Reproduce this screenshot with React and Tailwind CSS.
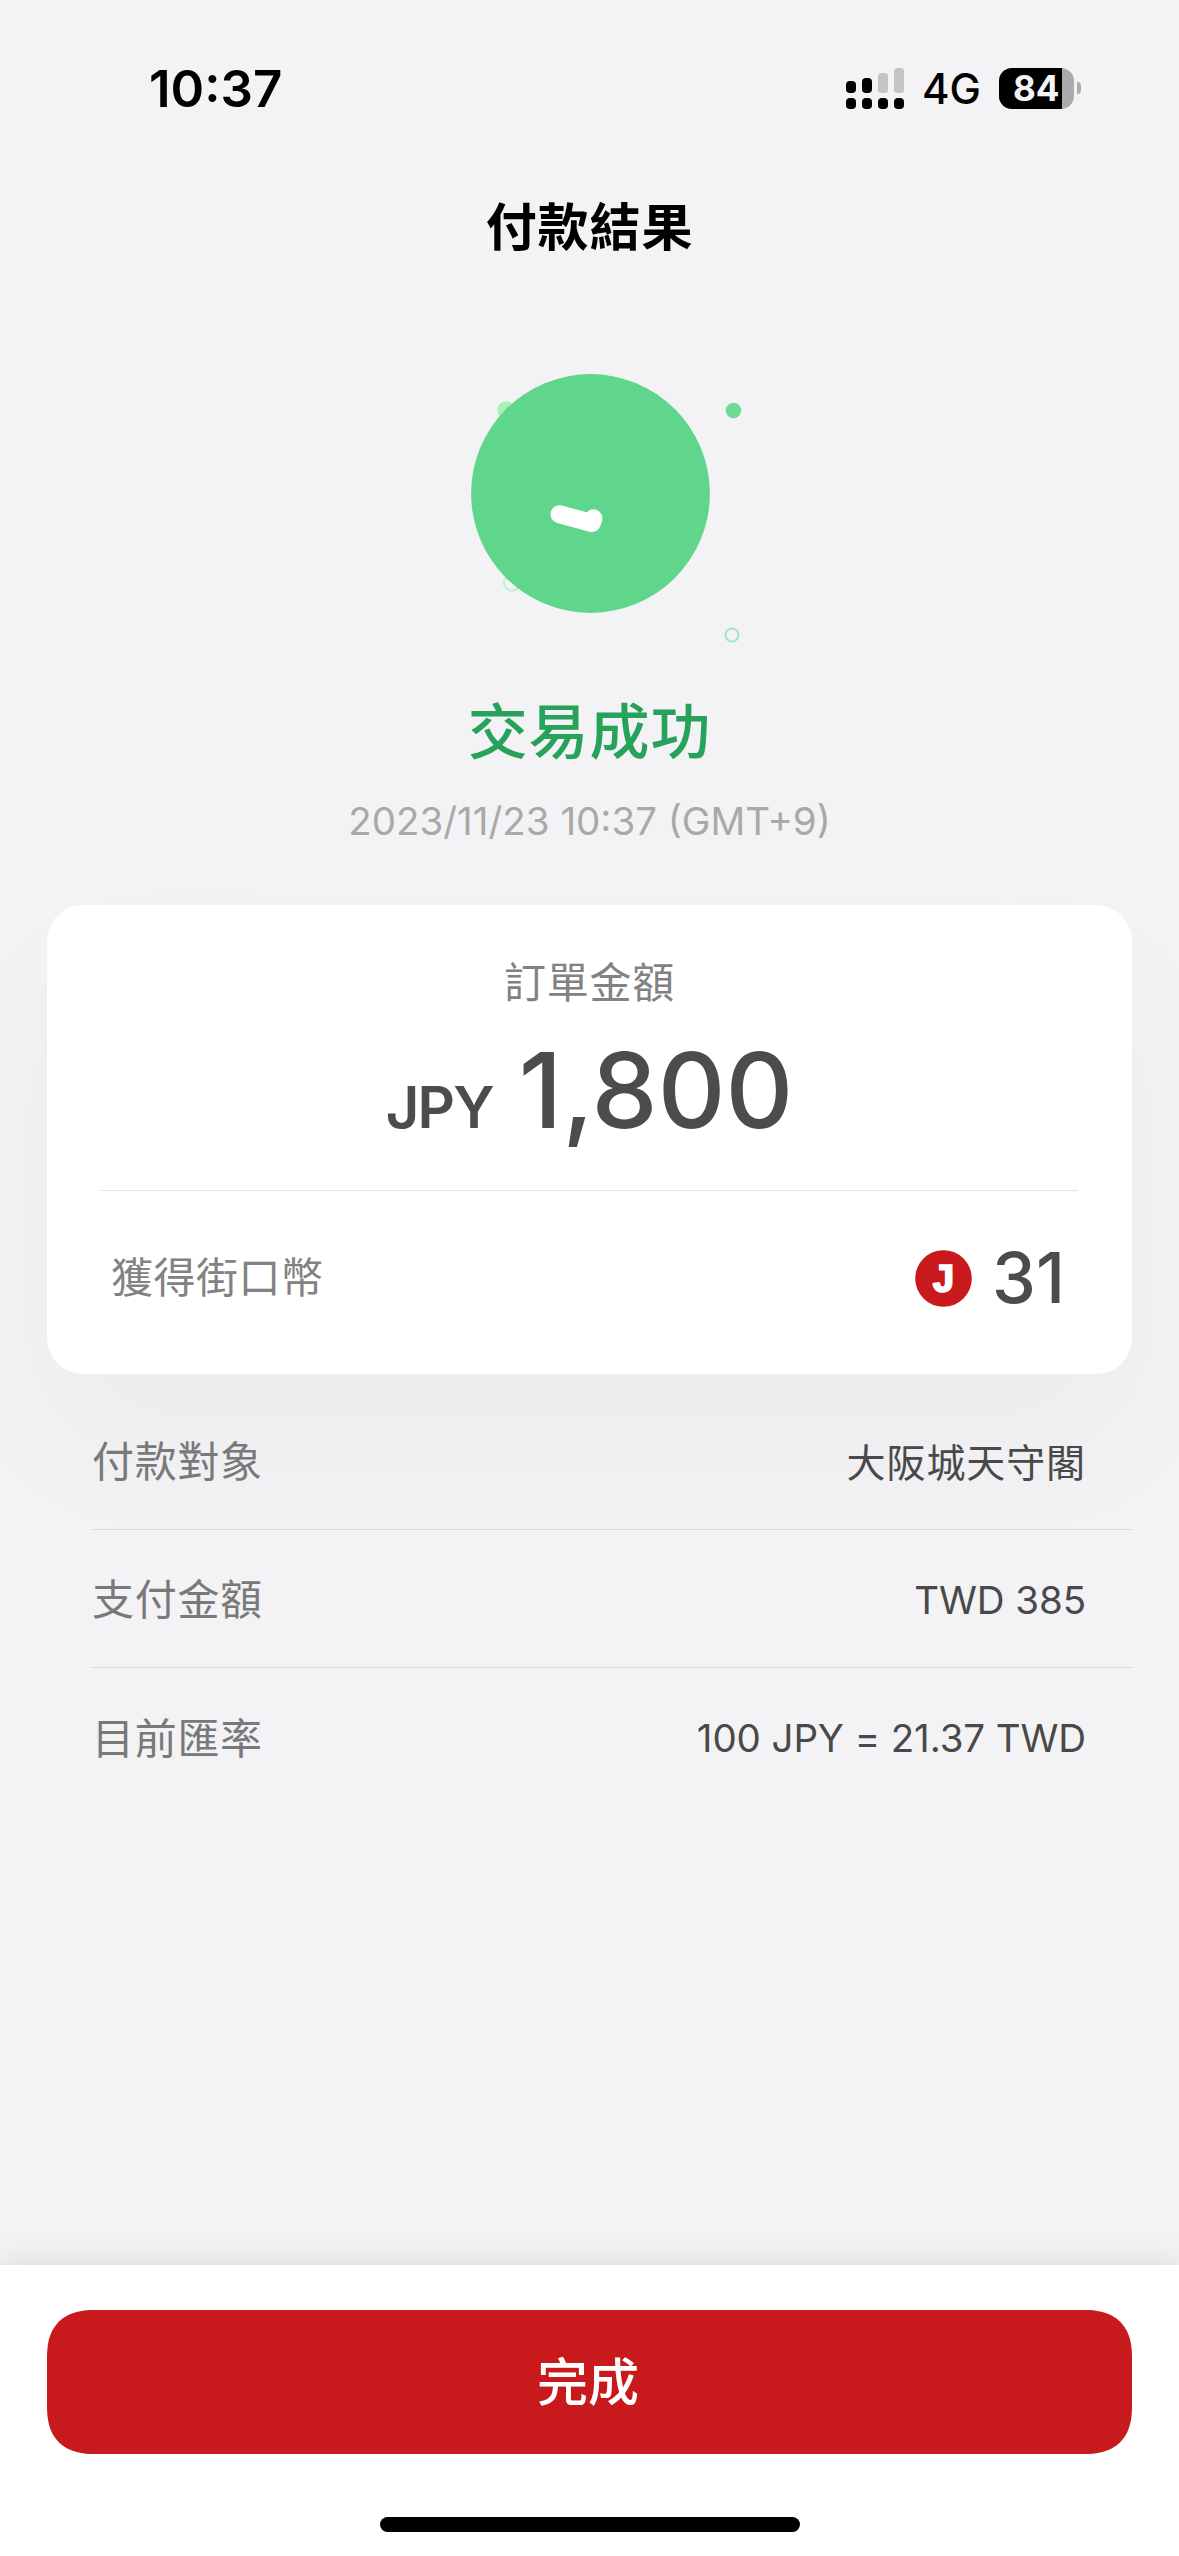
// Mobile signal: dotted second line on the bottom row
function SignalIcon() {
  return (
    <svg width="58" height="41" viewBox="0 0 58 41">
      <rect x="0" y="13" width="10" height="12" rx="4" />
      <rect x="16" y="10" width="10" height="15" rx="4" />
      <rect x="32" y="5" width="10" height="20" rx="3.5" fill="#c4c4c6" />
      <rect x="48" y="0" width="10" height="25" rx="3.5" fill="#c4c4c6" />
      <rect x="0" y="30" width="10" height="11" rx="4" />
      <rect x="16" y="30" width="10" height="11" rx="4" />
      <rect x="32" y="30" width="10" height="11" rx="4" />
      <rect x="48" y="30" width="10" height="11" rx="4" />
    </svg>
  )
}

function Battery({ level }) {
  return (
    <div className="flex items-center gap-[3px]">
      <div className="relative flex h-[41px] w-[75px] items-center overflow-hidden rounded-[13px] bg-[#ababad]">
        <div className="absolute inset-y-0 left-0 w-[63px] bg-black" />
        <span className="relative w-full pl-[14px] text-[35px] leading-[41px] font-bold text-[#f3f3f6]">{level}</span>
      </div>
      <div className="h-3 w-1 rounded-r-full bg-[#ababad]" />
    </div>
  )
}

function StatusBar() {
  return (
    <div className="flex h-44 items-center justify-between pr-[98px] pl-[149px]">
      <span className="text-[51px] leading-none font-semibold">10:37</span>
      <div className="flex items-center">
        <SignalIcon />
        <span className="mt-[2px] ml-[18px] w-[77px] text-[42px] leading-none font-medium">4G</span>
        <Battery level={84} />
      </div>
    </div>
  )
}

function SuccessBadge() {
  return (
    <svg className="mx-auto mt-[72px] block" width="330" height="310" viewBox="0 0 330 310">
      <circle cx="81" cy="60" r="8.7" fill="#a9efb8" />
      <circle cx="87" cy="232.5" r="8.2" fill="none" stroke="#c2f1d1" strokeWidth="2" />
      <circle cx="165.5" cy="143.5" r="119.4" fill="#5fd68b" />
      <circle cx="308.5" cy="60.5" r="7.8" fill="#70d996" />
      <circle cx="307" cy="285" r="6.5" fill="none" stroke="#a3e5bb" strokeWidth="2" />
      <path d="M134.5 164.3L166.8 173L168.4 168.3" fill="none" stroke="#fff" strokeWidth="18" strokeLinecap="round" strokeLinejoin="round" />
    </svg>
  )
}

function CoinIcon() {
  return (
    <svg width="57" height="57" viewBox="0 0 57 57">
      <circle cx="28.5" cy="28.5" r="28.3" fill="#c8191c" />
      <text x="28.5" y="42" textAnchor="middle" strokeWidth="1.6" className="fill-white stroke-white font-['Liberation_Mono',monospace] text-[41px] font-bold">J</text>
    </svg>
  )
}

function DetailRow({ label, value, cjk, last }) {
  return (
    <div className={`ml-[92px] mr-[47px] flex h-[138px] items-center justify-between pr-[46px] pt-[3px] ${last ? '' : 'border-b border-[#d9d9db]'}`}>
      <span className="text-[42px] leading-none tracking-[0.7px] text-[#79797a]">{label}</span>
      <span className={`leading-none text-[#49494a] ${cjk ? 'text-[39px] tracking-[0.9px]' : 'text-[38.5px] tracking-[-0.1px]'}`}>{value}</span>
    </div>
  )
}

const details = [
  { label: '付款對象', value: '大阪城天守閣', cjk: true },
  { label: '支付金額', value: 'TWD 385' },
  { label: '目前匯率', value: '100 JPY = 21.37 TWD' },
]

export default function App() {
  return (
    <div className="flex h-[2556px] w-[1179px] flex-col overflow-hidden bg-[#f3f3f6] font-[Inter,'Noto_Sans_CJK_TC',sans-serif] text-black">
      <StatusBar />
      <h1 className="pt-px text-center text-[51px] leading-[101px] font-semibold tracking-[0.9px]">付款結果</h1>

      <SuccessBadge />
      <p className="mt-[32px] text-center text-[60px] leading-[81px] font-medium tracking-[0.9px] text-[#27a25b]">交易成功</p>
      <p className="mt-[18px] text-center text-[38.5px] leading-[60px] text-[#a9a9aa]">2023/11/23 10:37 (GMT+9)</p>

      {/* Order summary */}
      <div className="mx-[47px] mt-[54px] h-[469px] shrink-0 rounded-[36px] bg-white pt-12 shadow-[0_72px_150px_rgba(0,0,0,0.032)]">
        <p className="text-center text-[42px] leading-[60px] tracking-[0.7px] text-[#828282]">訂單金額</p>
        <div className="mt-[17px] flex items-baseline justify-center gap-[26px] text-[#4c4c4c]">
          <span className="text-[58px] leading-none font-semibold tracking-[-1.8px]">JPY</span>
          <span className="text-[105px] leading-[120px] font-medium">1,800</span>
        </div>
        <div className="mr-[54px] ml-[54px] mt-10 h-px bg-[#e3e3e3]" />
        <div className="flex h-[174px] items-center justify-between pr-[67px] pl-[64px]">
          <span className="text-[42px] leading-none tracking-[0.5px] text-[#828282]">獲得街口幣</span>
          <div className="flex items-center gap-5">
            <CoinIcon />
            <span className="text-[70px] leading-none font-medium text-[#4c4c4c]">31</span>
          </div>
        </div>
      </div>

      <div className="mt-[18px]">
        {details.map((d, i) => (
          <DetailRow key={d.label} {...d} last={i === details.length - 1} />
        ))}
      </div>

      {/* Bottom action */}
      <div className="mt-auto flex h-[291px] flex-col items-center bg-white px-[47px] pt-[45px] shadow-[0_-3px_30px_rgba(0,0,0,0.1)]">
        <button className="h-36 w-full rounded-[48px] bg-[#c8191c] pt-[3px] pr-[3px] text-[51px] font-medium text-white [corner-shape:superellipse(1.3)]">完成</button>
        <div className="mt-[63px] h-[15px] w-[420px] rounded-full bg-black" />
      </div>
    </div>
  )
}
